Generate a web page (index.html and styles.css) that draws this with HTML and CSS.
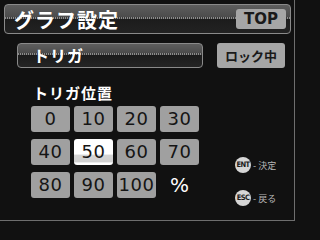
FILE: index.html
```html
<!DOCTYPE html>
<html lang="ja">
<head>
<meta charset="utf-8">
<link rel="stylesheet" href="styles.css">
</head>
<body>
<div class="screen">
  <div class="titlebar">
    <span class="title">グラフ設定</span>
    <span class="top-btn">TOP</span>
  </div>
  <div class="trigger-row">
    <div class="trigger-bar">トリガ</div>
    <span class="lock-btn">ロック中</span>
  </div>
  <div class="label">トリガ位置</div>
  <div class="main">
    <div class="grid">
      <span class="key">0</span>
      <span class="key">10</span>
      <span class="key">20</span>
      <span class="key">30</span>
      <span class="key">40</span>
      <span class="key selected">50</span>
      <span class="key">60</span>
      <span class="key">70</span>
      <span class="key">80</span>
      <span class="key">90</span>
      <span class="key">100</span>
      <span class="unit">%</span>
    </div>
    <div class="legend">
      <div class="legend-item"><span class="badge">ENT</span><span class="legend-text">- 決定</span></div>
      <div class="legend-item"><span class="badge">ESC</span><span class="legend-text">- 戻る</span></div>
    </div>
  </div>
</div>
</body>
</html>
```

FILE: styles.css
```css
html, body {
  margin: 0;
  padding: 0;
  background: #111111;
  width: 296px;
  height: 222px;
  overflow: hidden;
}

.screen {
  width: 294px;
  height: 220px;
  border-right: 1px solid #6e6e6e;
  border-bottom: 1px solid #6e6e6e;
  background: #111111;
  display: flex;
  flex-direction: column;
  font-family: "Noto Sans CJK JP", "DejaVu Sans", sans-serif;
  color: #ffffff;
}

.titlebar {
  margin: 4px 0 0 4px;
  width: 287px;
  height: 30px;
  box-sizing: border-box;
  border: 1px solid #8a8a8a;
  border-radius: 4px;
  display: flex;
  align-items: center;
  justify-content: space-between;
  padding: 0 4px 0 9px;
  background:
    repeating-linear-gradient(90deg, #8c8c8c 0 1px, #3a3a3a 1px 2px) 0 12px / 100% 2px no-repeat,
    linear-gradient(to bottom, #5e5e5e 0, #4c4c4c 12px, #1c1c1c 14px, #222222 100%);
}

.title {
  font-size: 20px;
  font-weight: bold;
  letter-spacing: 1px;
  line-height: 1;
  margin-top: 1px;
  color: #ffffff;
}

.top-btn {
  width: 50px;
  height: 20px;
  background: #a6a6a6;
  border-radius: 3px;
  color: #1a1a1a;
  font-family: "DejaVu Sans", sans-serif;
  font-weight: bold;
  font-size: 15px;
  line-height: 20px;
  text-align: center;
}

.trigger-row {
  display: flex;
  align-items: flex-start;
  margin-top: 9px;
  margin-left: 17px;
}

.trigger-bar {
  width: 186px;
  height: 25px;
  box-sizing: border-box;
  border: 1px solid #8a8a8a;
  border-radius: 4px;
  padding-left: 15px;
  font-size: 16px;
  font-weight: bold;
  line-height: 23px;
  letter-spacing: 1px;
  background:
    repeating-linear-gradient(90deg, #8c8c8c 0 1px, #3a3a3a 1px 2px) 0 9px / 100% 2px no-repeat,
    linear-gradient(to bottom, #5e5e5e 0, #4c4c4c 9px, #1c1c1c 11px, #242424 100%);
}

.lock-btn {
  margin-left: 14px;
  width: 68px;
  height: 25px;
  background: #a6a6a6;
  border-radius: 3px;
  color: #1a1a1a;
  font-size: 13px;
  font-weight: bold;
  line-height: 25px;
  text-align: center;
}

.label {
  margin: 16px 0 0 33px;
  font-size: 15px;
  font-weight: bold;
  letter-spacing: 1px;
  line-height: 17px;
  height: 17px;
}

.main {
  display: flex;
  margin-top: 5px;
  margin-left: 31px;
}

.grid {
  display: grid;
  grid-template-columns: repeat(4, 39px);
  grid-auto-rows: 26px;
  column-gap: 4px;
  row-gap: 7px;
}

.key {
  background: #a0a0a0;
  border-radius: 3px;
  color: #151515;
  font-family: "DejaVu Sans", sans-serif;
  font-size: 18px;
  letter-spacing: 0.5px;
  line-height: 26px;
  text-align: center;
}

.key.selected {
  background: linear-gradient(to bottom, #ffffff 0, #ffffff 58%, #d4d4d4 62%, #d0d0d0 88%, #ffffff 92%);
}

.unit {
  color: #ffffff;
  font-family: "DejaVu Sans", sans-serif;
  font-size: 20px;
  line-height: 26px;
  text-align: center;
}

.legend {
  display: flex;
  flex-direction: column;
  gap: 17px;
  margin-left: 36px;
  margin-top: 51px;
}

.legend-item {
  display: flex;
  align-items: center;
  height: 16px;
}

.badge {
  width: 16px;
  height: 16px;
  border-radius: 50%;
  background: #d6d6d6;
  color: #1a1a1a;
  font-family: "DejaVu Sans", sans-serif;
  font-stretch: condensed;
  font-size: 7.5px;
  font-weight: bold;
  letter-spacing: -0.6px;
  line-height: 16px;
  text-align: center;
}

.legend-text {
  margin-left: 2px;
  font-size: 9px;
  color: #b8b8b8;
  white-space: pre;
}
```
